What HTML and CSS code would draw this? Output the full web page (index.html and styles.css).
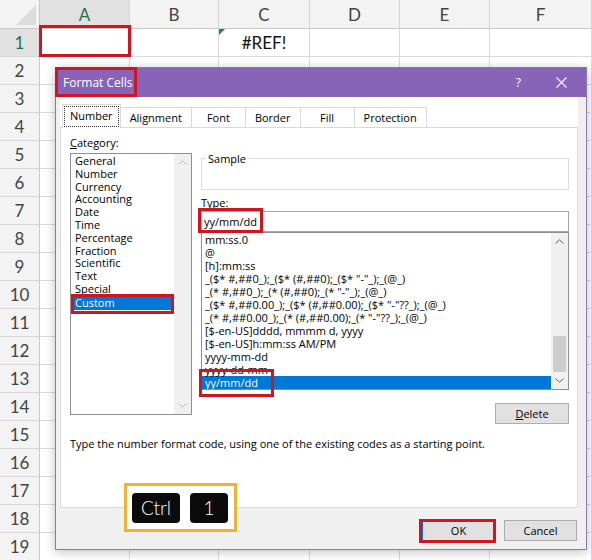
FILE: index.html
```html
<!DOCTYPE html>
<html>
<head>
<meta charset="utf-8">
<link rel="stylesheet" href="styles.css">
</head>
<body>
<div class="sheet">
  <div class="corner"></div><div class="ch sel">A</div><div class="ch">B</div><div class="ch">C</div><div class="ch">D</div><div class="ch">E</div><div class="ch">F</div>
  <div class="rh sel">1</div><div></div><div></div><div class="err">#REF!</div><div></div><div></div><div></div>
  <div class="rh">2</div><div></div><div></div><div></div><div></div><div></div><div></div>
  <div class="rh">3</div><div></div><div></div><div></div><div></div><div></div><div></div>
  <div class="rh">4</div><div></div><div></div><div></div><div></div><div></div><div></div>
  <div class="rh">5</div><div></div><div></div><div></div><div></div><div></div><div></div>
  <div class="rh">6</div><div></div><div></div><div></div><div></div><div></div><div></div>
  <div class="rh">7</div><div></div><div></div><div></div><div></div><div></div><div></div>
  <div class="rh">8</div><div></div><div></div><div></div><div></div><div></div><div></div>
  <div class="rh">9</div><div></div><div></div><div></div><div></div><div></div><div></div>
  <div class="rh">10</div><div></div><div></div><div></div><div></div><div></div><div></div>
  <div class="rh">11</div><div></div><div></div><div></div><div></div><div></div><div></div>
  <div class="rh">12</div><div></div><div></div><div></div><div></div><div></div><div></div>
  <div class="rh">13</div><div></div><div></div><div></div><div></div><div></div><div></div>
  <div class="rh">14</div><div></div><div></div><div></div><div></div><div></div><div></div>
  <div class="rh">15</div><div></div><div></div><div></div><div></div><div></div><div></div>
  <div class="rh">16</div><div></div><div></div><div></div><div></div><div></div><div></div>
  <div class="rh">17</div><div></div><div></div><div></div><div></div><div></div><div></div>
  <div class="rh">18</div><div></div><div></div><div></div><div></div><div></div><div></div>
  <div class="rh">19</div><div></div><div></div><div></div><div></div><div></div><div></div>
</div>

<div class="dialog">
  <div class="titlebar">
    <span class="title">Format Cells</span>
    <span class="help">?</span>
    <svg class="close" width="11" height="11" viewBox="0 0 11 11"><path d="M0.5 0.5L10.5 10.5M10.5 0.5L0.5 10.5" stroke="#fff" stroke-width="1.1" fill="none"/></svg>
  </div>
  <div class="tabctl">
    <div class="tabs">
      <div class="tab active"><span class="focus">Number</span></div>
      <div class="tab">Alignment</div>
      <div class="tab">Font</div>
      <div class="tab">Border</div>
      <div class="tab">Fill</div>
      <div class="tab">Protection</div>
    </div>
    <div class="panel">
      <div class="cols">
        <div class="leftcol">
          <div class="lbl"><u>C</u>ategory:</div>
          <div class="listbox catlist">
            <div class="items">
              <div class="item">General</div>
              <div class="item">Number</div>
              <div class="item">Currency</div>
              <div class="item">Accounting</div>
              <div class="item">Date</div>
              <div class="item">Time</div>
              <div class="item">Percentage</div>
              <div class="item">Fraction</div>
              <div class="item">Scientific</div>
              <div class="item">Text</div>
              <div class="item">Special</div>
              <div class="item selected">Custom</div>
            </div>
            <div class="sbar disabled">
              <div class="arrow"><svg width="9" height="5" viewBox="0 0 9 5"><polyline points="0.5,4.5 4.5,0.8 8.5,4.5" fill="none" stroke="currentColor" stroke-width="1"/></svg></div>
              <div class="track"></div>
              <div class="arrow"><svg width="9" height="5" viewBox="0 0 9 5"><polyline points="0.5,0.5 4.5,4.2 8.5,0.5" fill="none" stroke="currentColor" stroke-width="1"/></svg></div>
            </div>
          </div>
        </div>
        <div class="rightcol">
          <div class="sample"><div class="sample-lbl">Sample</div></div>
          <div class="lbl type-lbl">Type:</div>
          <div class="typebox">yy/mm/dd</div>
          <div class="listbox fmtlist">
            <div class="items">
              <div class="item">mm:ss.0</div>
              <div class="item">@</div>
              <div class="item">[h]:mm:ss</div>
              <div class="item">_($* #,##0_);_($* (#,##0);_($* "-"_);_(@_)</div>
              <div class="item">_(* #,##0_);_(* (#,##0);_(* "-"_);_(@_)</div>
              <div class="item">_($* #,##0.00_);_($* (#,##0.00);_($* "-"??_);_(@_)</div>
              <div class="item">_(* #,##0.00_);_(* (#,##0.00);_(* "-"??_);_(@_)</div>
              <div class="item">[$-en-US]dddd, mmmm d, yyyy</div>
              <div class="item">[$-en-US]h:mm:ss AM/PM</div>
              <div class="item">yyyy-mm-dd</div>
              <div class="item">yyyy-dd-mm</div>
              <div class="item selected">yy/mm/dd</div>
            </div>
            <div class="sbar">
              <div class="arrow"><svg width="9" height="5" viewBox="0 0 9 5"><polyline points="0.5,4.5 4.5,0.8 8.5,4.5" fill="none" stroke="currentColor" stroke-width="1"/></svg></div>
              <div class="track"><div class="thumb"></div></div>
              <div class="arrow"><svg width="9" height="5" viewBox="0 0 9 5"><polyline points="0.5,0.5 4.5,4.2 8.5,0.5" fill="none" stroke="currentColor" stroke-width="1"/></svg></div>
            </div>
          </div>
          <div class="delrow"><div class="btn"><u>D</u>elete</div></div>
        </div>
      </div>
      <p class="desc">Type the number format code, using one of the existing codes as a starting point.</p>
    </div>
  </div>
  <div class="footer">
    <div class="btn default">OK</div>
    <div class="btn">Cancel</div>
  </div>
</div>

<div class="mark m-a1"></div>
<div class="mark m-title"></div>
<div class="mark m-type"></div>
<div class="mark m-custom"></div>
<div class="mark m-sel"></div>
<div class="mark m-ok"></div>

<div class="keys">
  <div class="key">Ctrl</div>
  <div class="key one">1</div>
</div>
</body>
</html>
```

FILE: styles.css
```css
* { box-sizing: border-box; }

body {
  margin: 0;
  width: 592px;
  height: 560px;
  overflow: hidden;
  position: relative;
  background: #fff;
  font-family: Lato, "Liberation Sans", sans-serif;
}

/* ---------- spreadsheet ---------- */
.sheet {
  display: grid;
  grid-template-columns: 40px 90px 89px 91px 90px 90px 102px;
  grid-template-rows: 29px repeat(19, 28px);
}
.sheet > div {
  border-right: 1px solid #dadada;
  border-bottom: 1px solid #dadada;
}
.corner {
  background: #f3f3f3;
  position: relative;
  border-color: #c8c8c8 !important;
}
.corner::after {
  content: "";
  position: absolute;
  right: 3px;
  bottom: 3px;
  width: 0;
  height: 0;
  border-left: 20px solid transparent;
  border-bottom: 20px solid #dcdcdc;
}
.ch, .rh {
  background: #f3f3f3;
  color: #444;
  font-size: 17px;
  display: flex;
  align-items: center;
  justify-content: center;
}
.ch { border-bottom-color: #c8c8c8 !important; border-right-color: #d6d6d6 !important; }
.rh { border-right-color: #c8c8c8 !important; border-bottom-color: #d6d6d6 !important; }
.ch.sel, .rh.sel { background: #e1e1e1; color: #217346; }
.err {
  position: relative;
  font-size: 17px;
  display: flex;
  align-items: center;
  justify-content: center;
  color: #111;
}
.err::before {
  content: "";
  position: absolute;
  left: 0;
  top: 0;
  border-top: 6px solid #1e8a3c;
  border-right: 6px solid transparent;
}

/* ---------- dialog ---------- */
.dialog {
  position: absolute;
  left: 55px;
  top: 67px;
  width: 532px;
  height: 483px;
  background: #f0f0f0;
  border: 1px solid #8b79aa;
  box-shadow: 0 2px 10px rgba(0,0,0,0.25);
  display: flex;
  flex-direction: column;
  font-family: "Open Sans", "Noto Sans", sans-serif;
  font-size: 11px;
  color: #000;
}
.titlebar {
  height: 29px;
  flex: none;
  background: #8764b8;
  color: #fff;
  display: flex;
  align-items: center;
  padding: 0 19px 0 7px;
  font-size: 12px;
}
.title { flex: 1; }
.help { font-size: 12px; margin-right: 35px; }
.close { display: block; }

.tabctl {
  margin: 0 8px 0 4px;
  background: #fff;
  padding-top: 7px;
  flex: none;
}
.tabs {
  display: flex;
  align-items: flex-end;
  height: 23px;
  padding-left: 2px;
}
.tab {
  height: 20px;
  min-width: 55px;
  padding: 0 9px;
  border: 1px solid #d9d9d9;
  border-bottom: none;
  margin-left: -1px;
  background: #fff;
  text-align: center;
  line-height: 19px;
  white-space: nowrap;
}
.tab:first-child { margin-left: 0; }
.tab.active {
  height: 24px;
  margin-bottom: -1px;
  position: relative;
  z-index: 1;
  padding: 2px 2px 0;
  line-height: 17px;
}
.focus {
  display: block;
  outline: 1px dotted #333;
  padding: 0 5px;
  height: 19px;
}

.panel {
  border: 1px solid #d9d9d9;
  height: 381px;
  padding: 8px 8px 0 9px;
}
.cols { display: flex; gap: 9px; }
.leftcol { width: 122px; flex: none; }
.rightcol { flex: 1; }
.lbl { line-height: 13px; }
.leftcol .lbl { margin-bottom: 4px; }

.listbox {
  display: flex;
  border: 1px solid #8f8f8f;
  background: #fff;
}
.catlist { height: 262px; }
.catlist .items { padding: 1px 0 0 1px; }
.catlist .item { height: 12.8px; line-height: 12.8px; }
.catlist .item.selected { height: 15px; line-height: 15px; margin-top: -1px; }
.items { flex: 1; overflow: hidden; }
.item {
  line-height: 13px;
  height: 13px;
  padding-left: 3px;
  white-space: nowrap;
}
.item.selected { background: #0078d7; color: #fff; }

.sbar {
  width: 17px;
  flex: none;
  background: #f0f0f0;
  display: flex;
  flex-direction: column;
  color: #606060;
}
.sbar.disabled { color: #bfbfbf; }
.arrow {
  height: 17px;
  display: flex;
  align-items: center;
  justify-content: center;
}
.arrow svg { display: block; }
.track { flex: 1; display: flex; flex-direction: column; }
.thumb {
  margin: auto 2px 0;
  height: 36px;
  background: #cdcdcd;
}

.sample {
  margin-top: 22px;
  height: 32px;
  border: 1px solid #dcdcdc;
}
.sample-lbl {
  width: fit-content;
  margin: -7px 0 0 4px;
  padding: 0 2px;
  background: #fff;
  line-height: 13px;
}
.type-lbl { margin-top: 6px; }
.typebox {
  margin-top: 2px;
  height: 21px;
  border: 1px solid #a6a6a6;
  padding-left: 2px;
  line-height: 19px;
}
.fmtlist { height: 158px; }
.fmtlist .items { padding-top: 0; }

.delrow {
  display: flex;
  justify-content: flex-end;
  margin-top: 13px;
}
.btn {
  width: 74px;
  height: 21px;
  background: #e1e1e1;
  border: 1px solid #adadad;
  text-align: center;
  line-height: 19px;
}
.btn.default { border-color: #0078d7; }

.desc {
  margin: 13px 0 0;
  line-height: 13px;
}

.footer {
  display: flex;
  justify-content: flex-end;
  gap: 9px;
  padding: 12px 9px 0 0;
}
.footer .btn { width: 73px; }

/* ---------- annotations ---------- */
.mark {
  position: absolute;
  border: 3px solid #cf1520;
}
.m-a1 { left: 39px; top: 25px; width: 92px; height: 32px; }
.m-title { left: 55px; top: 67px; width: 82px; height: 30px; }
.m-type { left: 198px; top: 208px; width: 65px; height: 25px; }
.m-custom { left: 71px; top: 294px; width: 103px; height: 20px; }
.m-sel { left: 199px; top: 369px; width: 75px; height: 28px; }
.m-ok { left: 419px; top: 519px; width: 77px; height: 24px; }

.keys {
  position: absolute;
  left: 124px;
  top: 483px;
  width: 113px;
  height: 49px;
  border: 3px solid #eeb334;
  background: #fff;
  display: flex;
  align-items: center;
  gap: 10px;
  padding: 0 6px 0 5px;
}
.key {
  height: 30px;
  width: 48px;
  background: #0b0b0b;
  border-radius: 4px;
  color: #fff;
  font-family: Lato, "DejaVu Sans", sans-serif;
  font-weight: 300;
  font-size: 19px;
  line-height: 30px;
  text-align: center;
}
.key.one { width: 38px; }
```
